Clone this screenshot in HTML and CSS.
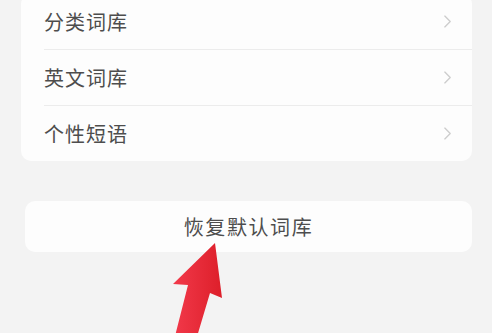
FILE: index.html
```html
<!DOCTYPE html>
<html lang="zh-CN">
<head>
<meta charset="utf-8">
<title>词库设置</title>
<link rel="stylesheet" href="styles.css">
</head>
<body>
<main class="page">
  <section class="list-card">
    <div class="row">
      <span class="label">分类词库</span>
      <svg class="chev" viewBox="0 0 10 16" width="9" height="15"><path d="M2 2 L8 8 L2 14" fill="none" stroke="#cdcdcd" stroke-width="1.5" stroke-linecap="round" stroke-linejoin="round"/></svg>
    </div>
    <div class="row">
      <span class="label">英文词库</span>
      <svg class="chev" viewBox="0 0 10 16" width="9" height="15"><path d="M2 2 L8 8 L2 14" fill="none" stroke="#cdcdcd" stroke-width="1.5" stroke-linecap="round" stroke-linejoin="round"/></svg>
    </div>
    <div class="row">
      <span class="label">个性短语</span>
      <svg class="chev" viewBox="0 0 10 16" width="9" height="15"><path d="M2 2 L8 8 L2 14" fill="none" stroke="#cdcdcd" stroke-width="1.5" stroke-linecap="round" stroke-linejoin="round"/></svg>
    </div>
  </section>
  <section class="restore-card">
    <span class="restore-text">恢复默认词库</span>
  </section>
</main>
<svg class="arrow" width="492" height="333" viewBox="0 0 492 333">
  <defs>
    <linearGradient id="ag" x1="0" y1="0" x2="1" y2="0">
      <stop offset="0" stop-color="#f2394a"/>
      <stop offset="1" stop-color="#dd1f2a"/>
    </linearGradient>
  </defs>
  <polygon points="215,243 222,298 210,293 196,340 174,340 188,285 173,284" fill="url(#ag)"/>
</svg>
</body>
</html>
```

FILE: styles.css
```css
html, body {
  margin: 0;
  padding: 0;
}
body {
  width: 492px;
  height: 333px;
  overflow: hidden;
  background: #f3f3f3;
  font-family: "Noto Sans CJK SC", "Noto Sans", sans-serif;
  position: relative;
}
.page {
  display: flex;
  flex-direction: column;
  padding: 0 20px 0 21px;
}
.list-card {
  margin-top: -6px;
  background: #fdfdfd;
  border-radius: 10px;
  padding: 0 0 0 23px;
}
.row {
  display: flex;
  align-items: center;
  justify-content: space-between;
  height: 55px;
  padding-right: 20px;
  border-bottom: 1.5px solid #ececec;
}
.row:last-child {
  border-bottom: none;
}
.label {
  font-size: 20px;
  letter-spacing: 1px;
  color: #4d4d4d;
}
.chev {
  display: block;
}
.restore-card {
  margin-top: 40px;
  margin-left: 4px;
  height: 51px;
  background: #fdfdfd;
  border-radius: 10px;
  display: flex;
  align-items: center;
  justify-content: center;
}
.restore-text {
  font-size: 20px;
  letter-spacing: 1.6px;
  color: #4d4d4d;
  margin-left: 0;
}
.arrow {
  position: absolute;
  left: 0;
  top: 0;
  pointer-events: none;
}
```
